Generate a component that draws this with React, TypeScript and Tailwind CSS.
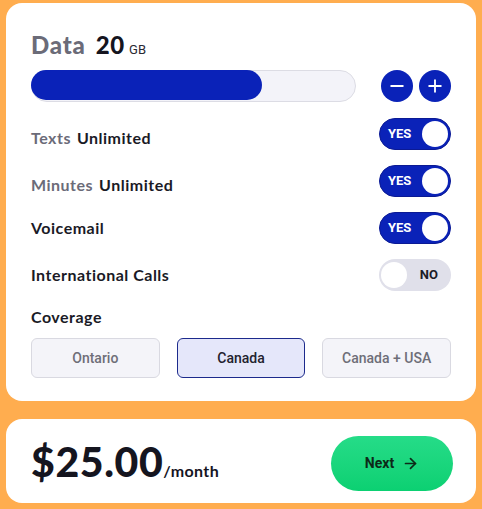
import { Minus, Plus, ArrowRight } from "lucide-react"

const head = "font-['Lato',sans-serif]"
const ui = "font-['Roboto',sans-serif]"

function Toggle({ on }: { on: boolean }) {
  if (on) {
    return (
      <div className="w-[72px] h-[32px] rounded-full bg-[#0a22b8] border border-[#0b1a94] flex items-center justify-between pl-[8px] pr-[2px]">
        <span className={`${ui} text-[13px] font-bold text-white`}>YES</span>
        <span className="w-[26px] h-[26px] rounded-full bg-white"></span>
      </div>
    )
  }
  return (
    <div className="w-[72px] h-[32px] rounded-full bg-[#e0e0ea] flex items-center justify-between pl-[2px] pr-[13px]">
      <span className="w-[26px] h-[26px] rounded-full bg-white"></span>
      <span className={`${ui} text-[13px] font-bold text-[#1c1c28]`}>NO</span>
    </div>
  )
}

function Row({ label, value, on }: { label: string; value?: string; on: boolean }) {
  return (
    <div className="flex items-center justify-between h-[32px]">
      <div className={`${head} text-[16px] font-bold tracking-[0.5px] flex gap-[6px] ${value ? "pt-[7px]" : ""}`}>
        {value ? (
          <>
            <span className="text-[#6b6b78]">{label}</span>
            <span className="text-[#1a1a26]">{value}</span>
          </>
        ) : (
          <span className="text-[#1a1a26]">{label}</span>
        )}
      </div>
      <Toggle on={on} />
    </div>
  )
}

export default function App() {
  return (
    <div className="w-[482px] h-[509px] bg-[#ffad4f] px-[6px] pt-[3px] flex flex-col gap-[18px]">
      <div className="h-[398px] rounded-2xl bg-white px-[25px] pt-[30px]">
        <div className="flex items-baseline h-[24px] leading-none">
          <span className={`${head} text-[24px] font-black tracking-[0.8px] text-[#6b6b78]`}>Data</span>
          <span className={`${head} text-[24px] font-black tracking-[0.8px] text-[#15151f] ml-[10px]`}>20</span>
          <span className={`${ui} text-[13px] text-[#2a2a33] ml-[4px]`}>GB</span>
        </div>
        <div className="mt-[13px] flex items-center justify-between">
          <div className="w-[325px] h-[32px] rounded-full bg-[#f3f3f9] border border-[#dcdce4]">
            <div className="w-[231px] h-full rounded-full bg-[#0a22b8] -m-px"></div>
          </div>
          <div className="flex gap-[6px]">
            <div className="w-[32px] h-[32px] rounded-full bg-[#0a22b8] flex items-center justify-center">
              <Minus size={20} color="white" strokeWidth={2.2} />
            </div>
            <div className="w-[32px] h-[32px] rounded-full bg-[#0a22b8] flex items-center justify-center">
              <Plus size={20} color="white" strokeWidth={2.2} />
            </div>
          </div>
        </div>
        <div className="mt-[16px] flex flex-col gap-[15px]">
          <Row label="Texts" value="Unlimited" on />
          <Row label="Minutes" value="Unlimited" on />
          <Row label="Voicemail" on />
          <Row label="International Calls" on={false} />
        </div>
        <div className={`${head} mt-[16px] text-[16px] font-bold tracking-[0.5px] text-[#1a1a26] leading-[20px]`}>Coverage</div>
        <div className="mt-[11px] grid grid-cols-3 gap-[17px]">
          <div className={`${ui} h-[40px] rounded-md bg-[#f4f4f9] border border-[#d9d9e1] flex items-center justify-center text-[14px] font-medium text-[#6e6e78]`}>Ontario</div>
          <div className={`${ui} h-[40px] rounded-md bg-[#e5e7fa] border border-[#1c2a8c] flex items-center justify-center text-[14px] font-medium text-[#22222e]`}>Canada</div>
          <div className={`${ui} h-[40px] rounded-md bg-[#f4f4f9] border border-[#d9d9e1] flex items-center justify-center text-[14px] font-medium text-[#6e6e78]`}>Canada + USA</div>
        </div>
      </div>
      <div className="h-[84px] rounded-2xl bg-white pl-[25px] pr-[23px] flex items-center justify-between">
        <div className="flex items-baseline leading-none">
          <span className={`${head} text-[41px] font-black tracking-[0.6px] text-[#15151f]`}>$25.00</span>
          <span className={`${head} text-[16px] font-bold tracking-[0.4px] text-[#15151f]`}>/month</span>
        </div>
        <div className="mt-[4px] w-[122px] h-[55px] rounded-full bg-gradient-to-b from-[#25dc88] to-[#0bd072] flex items-center justify-center gap-[8px]">
          <span className={`${ui} text-[14px] font-bold text-[#0d2a18]`}>Next</span>
          <ArrowRight size={17} color="#0d2a18" strokeWidth={2.4} />
        </div>
      </div>
    </div>
  )
}
